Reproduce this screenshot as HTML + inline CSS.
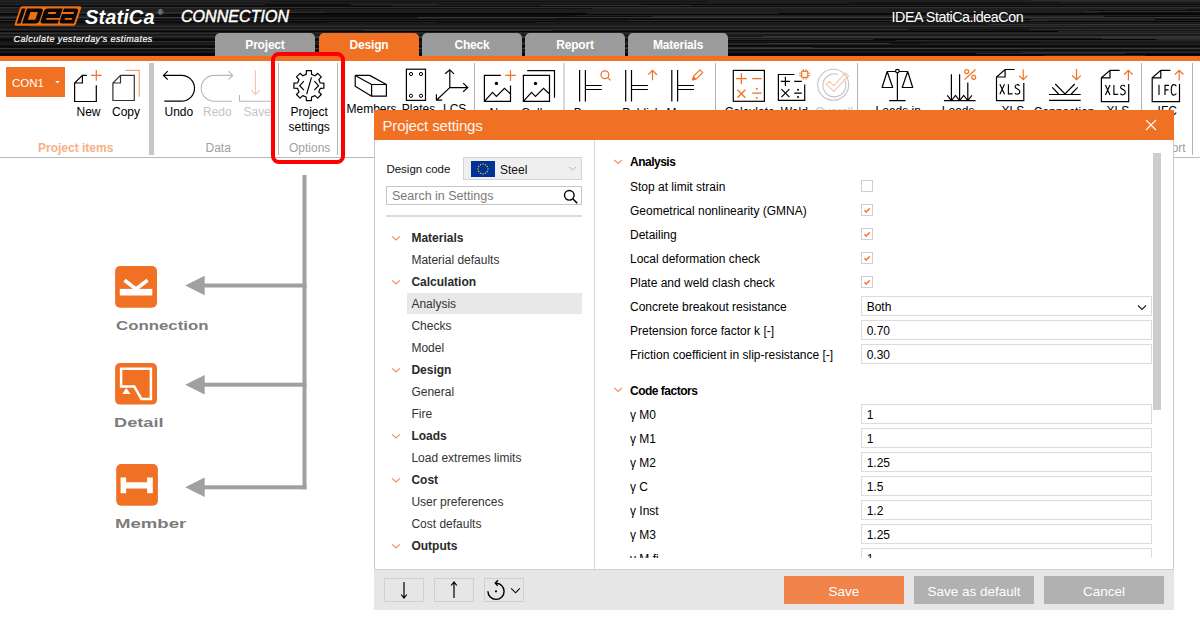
<!DOCTYPE html>
<html><head><meta charset="utf-8">
<style>
*{margin:0;padding:0;box-sizing:border-box}
html,body{width:1200px;height:630px;overflow:hidden;background:#fff;font-family:"Liberation Sans",sans-serif;color:#000}
.a{position:absolute}
svg{position:absolute;overflow:visible}
#hdr{left:0;top:0;width:1200px;height:56px;background:#222;
background-image:repeating-linear-gradient(180deg,#1c1c1c 0px,#2e2e2e 1px,#141414 2px,#262626 3px,#303030 4px,#181818 5px,#222 7px,#2a2a2a 8px,#101010 9px,#262626 11px);}
.tab{top:33px;height:23px;width:100px;border-radius:5px 5px 0 0;background:#9b9b9b;color:#fff;font-weight:bold;font-size:12px;text-align:center;line-height:25.5px;letter-spacing:-0.2px}
#ostrip{left:0;top:56px;width:1200px;height:5px;background:#f07124}
#rib{left:0;top:61px;width:1200px;height:96px;background:#fff}
#ribline{left:0;top:157px;width:1200px;height:1px;background:#b9b9b9}
.rl{font-size:12px;line-height:1;color:#000;white-space:nowrap}
.gl{font-size:12px;line-height:1;color:#a0a0a0;white-space:nowrap;top:142.4px}
.big{font-size:12.5px;line-height:1;font-weight:bold;color:#7c7c7c;white-space:nowrap;transform-origin:0 0}
.dt{font-size:12px;line-height:1;color:#111;white-space:nowrap}
.tb{font-size:12px;line-height:1;font-weight:bold;color:#2a2a2a;white-space:nowrap}
.tr{font-size:12px;line-height:1;color:#333;white-space:nowrap}
.rb{font-size:12px;line-height:1;font-weight:bold;color:#000;white-space:nowrap;letter-spacing:-0.5px}
.rr{font-size:12px;line-height:1;color:#000;white-space:nowrap}
.inp{width:291px;height:20px;border:1px solid #dcdcdc;background:#fff}
.fb{top:578px;width:40px;height:24px;border:1px solid #d0d0d0}
.btn{top:576px;width:120px;height:28px;color:#fff;font-size:13.5px;line-height:31px;text-align:center;white-space:nowrap}
</style></head><body>
<div id="hdr" class="a"></div>
<svg width="1200" height="56" style="left:0;top:0" shape-rendering="crispEdges"><rect x="0" y="0" width="1200" height="1" fill="rgb(30,30,30)"/><rect x="0" y="1" width="1200" height="1" fill="rgb(34,34,34)"/><rect x="0" y="2" width="1200" height="1" fill="rgb(30,30,30)"/><rect x="0" y="3" width="1200" height="1" fill="rgb(25,25,25)"/><rect x="0" y="4" width="1200" height="1" fill="rgb(12,12,12)"/><rect x="0" y="5" width="1200" height="1" fill="rgb(34,34,34)"/><rect x="0" y="6" width="1200" height="1" fill="rgb(12,12,12)"/><rect x="0" y="7" width="1200" height="1" fill="rgb(47,47,47)"/><rect x="0" y="8" width="1200" height="1" fill="rgb(33,33,33)"/><rect x="0" y="9" width="1200" height="1" fill="rgb(31,31,31)"/><rect x="0" y="10" width="1200" height="1" fill="rgb(29,29,29)"/><rect x="0" y="11" width="1200" height="1" fill="rgb(31,31,31)"/><rect x="0" y="12" width="1200" height="1" fill="rgb(31,31,31)"/><rect x="0" y="13" width="1200" height="1" fill="rgb(6,6,6)"/><rect x="0" y="14" width="1200" height="1" fill="rgb(8,8,8)"/><rect x="0" y="15" width="1200" height="1" fill="rgb(31,31,31)"/><rect x="0" y="16" width="1200" height="1" fill="rgb(12,12,12)"/><rect x="0" y="17" width="1200" height="1" fill="rgb(55,55,55)"/><rect x="0" y="18" width="1200" height="1" fill="rgb(30,30,30)"/><rect x="0" y="19" width="1200" height="1" fill="rgb(9,9,9)"/><rect x="0" y="20" width="1200" height="1" fill="rgb(32,32,32)"/><rect x="0" y="21" width="1200" height="1" fill="rgb(9,9,9)"/><rect x="0" y="22" width="1200" height="1" fill="rgb(30,30,30)"/><rect x="0" y="23" width="1200" height="1" fill="rgb(23,23,23)"/><rect x="0" y="24" width="1200" height="1" fill="rgb(27,27,27)"/><rect x="0" y="25" width="1200" height="1" fill="rgb(30,30,30)"/><rect x="0" y="26" width="1200" height="1" fill="rgb(47,47,47)"/><rect x="0" y="27" width="1200" height="1" fill="rgb(23,23,23)"/><rect x="0" y="28" width="1200" height="1" fill="rgb(26,26,26)"/><rect x="0" y="29" width="1200" height="1" fill="rgb(46,46,46)"/><rect x="0" y="30" width="1200" height="1" fill="rgb(22,22,22)"/><rect x="0" y="31" width="1200" height="1" fill="rgb(5,5,5)"/><rect x="0" y="32" width="1200" height="1" fill="rgb(33,33,33)"/><rect x="0" y="33" width="1200" height="1" fill="rgb(47,47,47)"/><rect x="0" y="34" width="1200" height="1" fill="rgb(25,25,25)"/><rect x="0" y="35" width="1200" height="1" fill="rgb(26,26,26)"/><rect x="0" y="36" width="1200" height="1" fill="rgb(50,50,50)"/><rect x="0" y="37" width="1200" height="1" fill="rgb(52,52,52)"/><rect x="0" y="38" width="1200" height="1" fill="rgb(23,23,23)"/><rect x="0" y="39" width="1200" height="1" fill="rgb(6,6,6)"/><rect x="0" y="40" width="1200" height="1" fill="rgb(12,12,12)"/><rect x="0" y="41" width="1200" height="1" fill="rgb(24,24,24)"/><rect x="0" y="42" width="1200" height="1" fill="rgb(25,25,25)"/><rect x="0" y="43" width="1200" height="1" fill="rgb(25,25,25)"/><rect x="0" y="44" width="1200" height="1" fill="rgb(34,34,34)"/><rect x="0" y="45" width="1200" height="1" fill="rgb(11,11,11)"/><rect x="0" y="46" width="1200" height="1" fill="rgb(11,11,11)"/><rect x="0" y="47" width="1200" height="1" fill="rgb(22,22,22)"/><rect x="0" y="48" width="1200" height="1" fill="rgb(58,58,58)"/><rect x="0" y="49" width="1200" height="1" fill="rgb(22,22,22)"/><rect x="0" y="50" width="1200" height="1" fill="rgb(11,11,11)"/><rect x="0" y="51" width="1200" height="1" fill="rgb(31,31,31)"/><rect x="0" y="52" width="1200" height="1" fill="rgb(23,23,23)"/><rect x="0" y="53" width="1200" height="1" fill="rgb(7,7,7)"/><rect x="0" y="54" width="1200" height="1" fill="rgb(9,9,9)"/><rect x="0" y="55" width="1200" height="1" fill="rgb(10,10,10)"/><rect x="406" y="53" width="277" height="1" fill="rgb(6,6,6)" opacity="0.6"/><rect x="-16" y="4" width="186" height="1" fill="rgb(8,8,8)" opacity="0.6"/><rect x="1031" y="0" width="268" height="1" fill="rgb(55,55,55)" opacity="0.6"/><rect x="728" y="39" width="145" height="1" fill="rgb(62,62,62)" opacity="0.6"/><rect x="976" y="53" width="149" height="1" fill="rgb(62,62,62)" opacity="0.6"/><rect x="1084" y="11" width="158" height="1" fill="rgb(55,55,55)" opacity="0.6"/><rect x="1050" y="14" width="207" height="1" fill="rgb(8,8,8)" opacity="0.6"/><rect x="1088" y="10" width="363" height="1" fill="rgb(8,8,8)" opacity="0.6"/><rect x="595" y="43" width="327" height="1" fill="rgb(6,6,6)" opacity="0.6"/><rect x="-103" y="26" width="133" height="1" fill="rgb(6,6,6)" opacity="0.6"/><rect x="849" y="2" width="210" height="1" fill="rgb(8,8,8)" opacity="0.6"/><rect x="602" y="47" width="211" height="1" fill="rgb(62,62,62)" opacity="0.6"/><rect x="1021" y="52" width="331" height="1" fill="rgb(55,55,55)" opacity="0.6"/><rect x="159" y="33" width="448" height="1" fill="rgb(6,6,6)" opacity="0.6"/><rect x="267" y="8" width="325" height="1" fill="rgb(6,6,6)" opacity="0.6"/><rect x="234" y="17" width="184" height="1" fill="rgb(6,6,6)" opacity="0.6"/><rect x="351" y="4" width="290" height="1" fill="rgb(62,62,62)" opacity="0.6"/><rect x="-77" y="15" width="103" height="1" fill="rgb(8,8,8)" opacity="0.6"/><rect x="555" y="18" width="351" height="1" fill="rgb(8,8,8)" opacity="0.6"/><rect x="541" y="5" width="150" height="1" fill="rgb(62,62,62)" opacity="0.6"/><rect x="1145" y="21" width="455" height="1" fill="rgb(8,8,8)" opacity="0.6"/><rect x="-129" y="37" width="89" height="1" fill="rgb(62,62,62)" opacity="0.6"/><rect x="438" y="22" width="97" height="1" fill="rgb(6,6,6)" opacity="0.6"/><rect x="1102" y="38" width="118" height="1" fill="rgb(62,62,62)" opacity="0.6"/><rect x="437" y="4" width="243" height="1" fill="rgb(8,8,8)" opacity="0.6"/><rect x="-46" y="4" width="311" height="1" fill="rgb(55,55,55)" opacity="0.6"/><rect x="-109" y="47" width="457" height="1" fill="rgb(8,8,8)" opacity="0.6"/><rect x="499" y="50" width="260" height="1" fill="rgb(6,6,6)" opacity="0.6"/><rect x="769" y="43" width="119" height="1" fill="rgb(62,62,62)" opacity="0.6"/><rect x="-139" y="50" width="335" height="1" fill="rgb(6,6,6)" opacity="0.6"/><rect x="1156" y="39" width="275" height="1" fill="rgb(62,62,62)" opacity="0.6"/><rect x="-175" y="37" width="391" height="1" fill="rgb(6,6,6)" opacity="0.6"/><rect x="-15" y="5" width="407" height="1" fill="rgb(6,6,6)" opacity="0.6"/><rect x="652" y="16" width="452" height="1" fill="rgb(55,55,55)" opacity="0.6"/><rect x="989" y="24" width="314" height="1" fill="rgb(62,62,62)" opacity="0.6"/><rect x="908" y="29" width="122" height="1" fill="rgb(6,6,6)" opacity="0.6"/><rect x="1031" y="19" width="124" height="1" fill="rgb(62,62,62)" opacity="0.6"/><rect x="271" y="1" width="437" height="1" fill="rgb(6,6,6)" opacity="0.6"/><rect x="1058" y="31" width="417" height="1" fill="rgb(62,62,62)" opacity="0.6"/><rect x="-177" y="16" width="268" height="1" fill="rgb(55,55,55)" opacity="0.6"/><rect x="1188" y="9" width="393" height="1" fill="rgb(8,8,8)" opacity="0.6"/><rect x="147" y="33" width="465" height="1" fill="rgb(55,55,55)" opacity="0.6"/><rect x="705" y="42" width="335" height="1" fill="rgb(8,8,8)" opacity="0.6"/><rect x="628" y="20" width="420" height="1" fill="rgb(55,55,55)" opacity="0.6"/><rect x="1098" y="12" width="300" height="1" fill="rgb(8,8,8)" opacity="0.6"/><rect x="587" y="13" width="192" height="1" fill="rgb(55,55,55)" opacity="0.6"/><rect x="78" y="13" width="148" height="1" fill="rgb(62,62,62)" opacity="0.6"/><rect x="-117" y="22" width="444" height="1" fill="rgb(6,6,6)" opacity="0.6"/><rect x="146" y="17" width="137" height="1" fill="rgb(62,62,62)" opacity="0.6"/><rect x="363" y="30" width="189" height="1" fill="rgb(62,62,62)" opacity="0.6"/><rect x="1081" y="24" width="346" height="1" fill="rgb(62,62,62)" opacity="0.6"/><rect x="445" y="43" width="446" height="1" fill="rgb(62,62,62)" opacity="0.6"/><rect x="-48" y="20" width="96" height="1" fill="rgb(55,55,55)" opacity="0.6"/><rect x="1044" y="55" width="101" height="1" fill="rgb(55,55,55)" opacity="0.6"/><rect x="525" y="36" width="238" height="1" fill="rgb(6,6,6)" opacity="0.6"/><rect x="78" y="41" width="287" height="1" fill="rgb(62,62,62)" opacity="0.6"/><rect x="-150" y="12" width="473" height="1" fill="rgb(55,55,55)" opacity="0.6"/><rect x="88" y="15" width="487" height="1" fill="rgb(6,6,6)" opacity="0.6"/><rect x="36" y="40" width="308" height="1" fill="rgb(6,6,6)" opacity="0.6"/><rect x="896" y="40" width="415" height="1" fill="rgb(55,55,55)" opacity="0.6"/></svg>
<!-- logo -->
<svg width="1200" height="60" style="left:0;top:0">
 <g transform="translate(20.6,6.3) skewX(-18.5)">
  <rect x="0" y="0" width="61.2" height="19.4" rx="1.8" fill="#f06e0e"/>
  <rect x="1.9" y="2.2" width="3.8" height="15" fill="#080808"/>
  <path d="M7.2,2.2 H20.7 Q23.7,2.2 23.7,5.2 V14.2 Q23.7,17.2 20.7,17.2 H7.2Z" fill="#080808"/>
  <rect x="11.7" y="5.7" width="7.5" height="7.8" fill="#f06e0e"/>
  <path d="M28,2.2 H42.9 V11.6 H29.9 V13.5 H42.9 V17.2 H28 Q25,17.2 25,14.2 V5.2 Q25,2.2 28,2.2Z" fill="#080808"/>
  <rect x="29.8" y="5.7" width="7.8" height="2.1" fill="#f06e0e"/>
  <path d="M44.1,2.2 H56 Q59.1,2.2 59.1,5.2 V17.2 H47.1 Q44.1,17.2 44.1,14.2 V7.8 H55.5 V5.7 H44.1Z" fill="#080808"/>
  <rect x="48.4" y="11.6" width="7.2" height="1.9" fill="#f06e0e"/>
 </g>
</svg>
<div class="a" style="left:85px;top:6px;font-size:20px;font-weight:bold;font-style:italic;color:#fff;white-space:nowrap;letter-spacing:0.1px">StatiCa</div>
<div class="a" style="left:157.5px;top:8px;font-size:8px;color:#ccc">&#174;</div>
<div class="a" style="left:181px;top:8px;font-size:16px;font-style:italic;font-weight:normal;-webkit-text-stroke:0.45px #fff;letter-spacing:0.05px;color:#fff;white-space:nowrap">CONNECTION</div>
<div class="a" style="left:13.5px;top:33.5px;font-size:9px;font-weight:normal;-webkit-text-stroke:0.2px #fff;font-style:italic;color:#fff;white-space:nowrap;letter-spacing:0.42px">Calculate yesterday's estimates</div>
<div class="a tab" style="left:215px">Project</div>
<div class="a tab" style="left:319px;background:#f07124">Design</div>
<div class="a tab" style="left:422px">Check</div>
<div class="a tab" style="left:525px">Report</div>
<div class="a tab" style="left:628px">Materials</div>
<div class="a" style="left:891.5px;top:8.5px;font-size:14.3px;color:#fff;white-space:nowrap;letter-spacing:-0.45px">IDEA StatiCa.ideaCon</div>
<div id="ostrip" class="a"></div>
<div id="rib" class="a"></div>
<div id="ribline" class="a"></div>
<!-- ribbon -->
<div class="a" style="left:6px;top:67px;width:59px;height:30px;background:#f07124"></div>
<div class="a" style="left:12px;top:77.8px;font-size:11.5px;line-height:1;color:#fff;white-space:nowrap">CON1</div>
<div class="a" style="left:149px;top:63px;width:5px;height:92px;background:#c6c6c6"></div>
<svg width="1200" height="160" style="left:0;top:0" fill="none" stroke="#000" stroke-width="1.2">
 <polygon points="55.3,81 59.7,81 57.5,83.5" fill="#fff" stroke="none"/>
 <!-- New -->
 <path d="M86.8,75.4 H82.4 L74.6,83 V101.5 H96.3 V85.3 M74.6,83 H82.4 V75.4"/>
 <path d="M96.3,70 V80.8 M91,75.4 H101.7" stroke="#f07124" stroke-width="1.2"/>
 <!-- Copy -->
 <path d="M120.5,75.4 H134.3 V100.5 H112.9 V83 Z M112.9,83 H120.5 V75.4" stroke="#333"/>
 <path d="M125.2,70.3 H139.3 V96.7" stroke="#f5a173" stroke-width="1.2"/>
 <!-- Undo -->
 <path d="M163.5,75.4 H181.6 A12.9,12.9 0 0 1 181.6,101.2 H164.3 M167.7,71.2 L163.5,75.4 L167.7,79.6"/>
 <!-- Redo -->
 <path d="M232.7,75.4 H214.1 A12.9,12.9 0 0 0 214.1,101.2 H232 M228.5,71.2 L232.7,75.4 L228.5,79.6" stroke="#b8b8b8" stroke-width="1.1"/>
 <!-- Save -->
 <path d="M239.5,95 V101.2 H272" stroke="#b8b8b8" stroke-width="1.1"/>
 <path d="M255.4,70.3 V94.5 M251.3,90.1 L255.4,94.5 L259.6,90.1" stroke="#f8c5ad" stroke-width="1.1"/>
 <!-- separators -->
 <path d="M278.5,63 V155 M337.5,63 V155 M474.5,63 V111 M564,63 V111 M715.5,63 V111 M857.5,63 V111 M1141.5,63 V111 M1192.5,63 V155" stroke="#b4b4b4" stroke-width="1"/>
 <!-- gear -->
 <path d="M306.2,74.4 L306.4,70.7 L311.4,70.7 L311.6,74.4 L315.0,75.8 L317.7,73.3 L321.3,76.9 L318.8,79.6 L320.2,83.0 L323.9,83.2 L323.9,88.2 L320.2,88.4 L318.8,91.8 L321.3,94.5 L317.7,98.1 L315.0,95.6 L311.6,97.0 L311.4,100.7 L306.4,100.7 L306.2,97.0 L302.8,95.6 L300.1,98.1 L296.5,94.5 L299.0,91.8 L297.6,88.4 L293.9,88.2 L293.9,83.2 L297.6,83.0 L299.0,79.6 L296.5,76.9 L300.1,73.3 L302.8,75.8Z" stroke-linejoin="round"/>
 <path d="M303.9,81.2 L299.7,85.7 L303.9,90.1 M314.3,81.2 L318.5,85.7 L314.3,90.1 M311.5,77.4 L306.7,94.2"/>
 <!-- Members -->
 <path d="M371.6,84.5 H386.4 V96.2 H371.6 Z M355.2,75.4 H369.7 L386.4,84.5 M355.2,75.4 L371.6,84.5 M355.2,75.4 V86.2 L371.6,96.2" stroke-linejoin="round"/>
 <!-- Plates -->
 <rect x="406.4" y="69.2" width="19.1" height="31.2"/>
 <g stroke-width="1"><circle cx="411" cy="74" r="1.6"/><circle cx="421" cy="74" r="1.6"/><circle cx="411" cy="95.8" r="1.6"/><circle cx="421" cy="95.8" r="1.6"/></g>
 <!-- LCS -->
 <path d="M449.8,87.6 V69.7 M445.1,73.8 L449.8,69.7 L453.9,73.8 M449.8,87.6 H467.7 M463.2,83.1 L467.7,87.6 L463.2,91.7 M449.8,87.6 L436.4,100.2 M436.4,94.2 V100.2 H442.2"/>
 <!-- New picture -->
 <path d="M500.8,75.4 H484.4 V101.3 H510.5 V85.4 M484.4,101.3 L492.5,92.4 L496.4,96.4 L504.5,88.4 L510.5,94"/>
 <circle cx="496.4" cy="83.4" r="1.7" fill="#000" stroke="none"/>
 <path d="M510.5,70.2 V80.9 M505.3,75.4 H515.8" stroke="#f07124" stroke-width="1.2"/>
 <!-- Gallery -->
 <path d="M523.4,75.4 H549.5 V101.3 H523.4 Z M523.4,101.3 L531.5,92.4 L535.5,96.4 L543.5,88.4 L549.5,94 M527.2,70.6 H554.5 V97.8"/>
 <circle cx="535.5" cy="83.4" r="1.7" fill="#000" stroke="none"/>
 <!-- browse/publish/manage -->
 <g id="bm">
 <path d="M579.6,70 V101.6 M585.4,70 V101.6 M585.4,85.5 H601.8 M585.4,89.5 H601.8"/>
 </g>
 <use href="#bm" x="46.1"/>
 <use href="#bm" x="92.2"/>
 <g stroke="#f07124" stroke-width="1.2">
  <circle cx="604.9" cy="74.7" r="3.9"/><path d="M607.6,77.4 L610.5,80.3"/>
  <path d="M652.5,70.4 V80.3 M648.4,74.7 L652.5,70.4 L656.9,74.7"/>
  <path d="M692.5,80 L693.6,76.1 L699.9,69.8 L702.7,72.6 L696.4,78.9 Z" stroke-linejoin="round"/>
 </g>
 <path d="M692.5,80 L693.6,76.1 L696.4,78.9 Z" fill="#f07124" stroke="none"/>
 <!-- Calculate -->
 <rect x="733.3" y="70.4" width="31.1" height="30.9"/>
 <g stroke="#f07124" stroke-width="1.3">
  <path d="M741.4,73.3 V83.9 M736.1,78.6 H746.7 M752.2,78.6 H761.7 M737.5,89.8 L745.3,97.7 M745.3,89.8 L737.5,97.7 M752.2,93.2 H761.7"/>
 </g>
 <circle cx="756.8" cy="88.7" r="1" fill="#f07124" stroke="none"/><circle cx="756.8" cy="98" r="1" fill="#f07124" stroke="none"/>
 <!-- Weld -->
 <path d="M794.4,74.5 H778.4 V100.4 H804.7 V84.4 M785.4,76.7 V85.9 M780.8,81.3 H790 M794.2,81.3 H801.8 M781.4,89.2 L789.4,97.2 M789.4,89.2 L781.4,97.2 M794.2,93.2 H801.8"/>
 <circle cx="798" cy="89.7" r="1" fill="#000" stroke="none"/><circle cx="798" cy="97" r="1" fill="#000" stroke="none"/>
 <g stroke="#f07124" stroke-width="1.1">
  <rect x="801.7" y="71.3" width="6" height="6"/>
  <path d="M803.4,69.3 V71.3 M806,69.3 V71.3 M803.4,77.3 V79.4 M806,77.3 V79.4 M799.2,73.3 H801.7 M799.2,75.7 H801.7 M807.7,73.3 H810 M807.7,75.7 H810"/>
 </g>
 <!-- Overall -->
 <circle cx="833.2" cy="84.8" r="15.5" stroke="#c4c4c4" stroke-width="1.1"/>
 <path d="M844,79 A11.5,11.5 0 1 1 838,74.4" stroke="#c4c4c4" stroke-width="1.1"/>
 <path d="M826.3,84.4 L829.4,81.3 L833.8,85.7 L845.6,72.9 L848.6,75.9 L833.8,91.3 Z" stroke="#f8c5ad" stroke-width="1.1" stroke-linejoin="round"/>
 <!-- Scales -->
 <path d="M897.4,71.5 V100.6 M889.2,100.6 H905.6 M887.2,71.5 H907.7 M887.2,71.5 L882.1,87.5 H892.7 Z M907.7,71.5 L902.2,87.5 H912.7 Z" stroke-linejoin="round"/>
 <circle cx="897.4" cy="71.1" r="1.8" fill="#fff"/>
 <!-- Loads -->
 <path d="M943.9,100.6 H975.6 M951.4,74.3 V100.6 M959.6,74.3 V100.6 M967.8,82.4 V100.6 M947.3,95.4 L951.4,100.6 L955.5,95.4 L959.6,100.6 L963.7,95.4 L967.8,100.6 L971.9,95.4"/>
 <g stroke="#f07124" stroke-width="1.2"><circle cx="966.7" cy="71.6" r="2"/><circle cx="973.7" cy="77.3" r="2"/><path d="M975.5,69.5 L964.5,79.6"/></g>
 <!-- XLS down -->
 <path d="M1014.7,69.5 H1005.1 L996.5,77 V100.6 H1023.8 V83.1 M996.5,77 H1005.1 V69.5"/>
 <g transform="translate(0,0)" stroke-width="1.15"><path d="M999.9,84.3 L1004.5,94.3 M1004.5,84.3 L999.9,94.3 M1008.4,84.3 V93.8 H1012.6 M1019.4,85.8 C1018.8,84.4 1015.2,84 1015.1,86.6 C1015,89 1019.8,88.6 1019.8,91.5 C1019.8,94.8 1015.6,94.8 1015,92.9"/></g>
 <path d="M1023.2,69.5 V79.7 M1019,75.6 L1023.2,79.7 L1027.3,75.6" stroke="#f07124" stroke-width="1.2"/>
 <!-- Connection -->
 <path d="M1049,94.5 H1080.7 M1049,100.3 H1080.7 M1052.3,87.3 L1058.6,94 M1055.3,84 L1065,94 L1074.7,84 M1077.7,87.3 L1071.2,94"/>
 <path d="M1076.5,69 V79.7 M1072,75.3 L1076.5,79.7 L1080.8,75.3" stroke="#f07124" stroke-width="1.2"/>
 <!-- XLS up -->
 <path d="M1119.6,70.3 H1110 L1101.4,77.8 V101.6 H1128.7 V84 M1101.4,77.8 H1110 V70.3"/>
 <g transform="translate(105.5,0.6)" stroke-width="1.15"><path d="M999.9,84.3 L1004.5,94.3 M1004.5,84.3 L999.9,94.3 M1008.4,84.3 V93.8 H1012.6 M1019.4,85.8 C1018.8,84.4 1015.2,84 1015.1,86.6 C1015,89 1019.8,88.6 1019.8,91.5 C1019.8,94.8 1015.6,94.8 1015,92.9"/></g>
 <path d="M1128.4,70.3 V80.6 M1124.2,74.5 L1128.4,70.3 L1132.6,74.5" stroke="#f07124" stroke-width="1.2"/>
 <!-- IFC -->
 <path d="M1170.4,70.3 H1160.8 L1152.2,77.8 V101.6 H1179.5 V84 M1152.2,77.8 H1160.8 V70.3"/>
 <g stroke-width="1.15"><path d="M1159,84.8 V95 M1165,84.8 V95 M1165,85.3 H1169 M1165,89.8 H1168.5 M1176.3,86.3 C1175.8,84.9 1174.8,84.6 1173.8,84.6 C1171.7,84.6 1171.3,86.5 1171.3,89.9 C1171.3,93.3 1171.7,95.1 1173.8,95.1 C1174.8,95.1 1175.8,94.8 1176.3,93.4"/></g>
 <path d="M1179.2,70.3 V80.6 M1175,74.5 L1179.2,70.3 L1183.4,74.5" stroke="#f07124" stroke-width="1.2"/>
</svg>
<div class="a rl" style="left:76.5px;top:106.2px">New</div>
<div class="a rl" style="left:112px;top:106.2px">Copy</div>
<div class="a rl" style="left:164.5px;top:106.2px">Undo</div>
<div class="a rl" style="left:203px;top:106.2px;color:#c4c4c4">Redo</div>
<div class="a rl" style="left:243.5px;top:106.2px;color:#c4c4c4">Save</div>
<div class="a rl" style="left:290.5px;top:105.6px">Project</div>
<div class="a rl" style="left:288.5px;top:121.3px">settings</div>
<div class="a gl" style="left:38px;font-weight:bold;color:#f6b088">Project items</div>
<div class="a gl" style="left:205.5px">Data</div>
<div class="a gl" style="left:289px">Options</div>
<div class="a rl" style="left:346.5px;top:103.2px">Members</div>
<div class="a rl" style="left:401.8px;top:103.2px">Plates</div>
<div class="a rl" style="left:443px;top:103.2px">LCS</div>
<div class="a rl" style="left:489.5px;top:106.6px">New</div>
<div class="a rl" style="left:521px;top:106.6px">Gallery</div>
<div class="a rl" style="left:573.7px;top:107px">Browse</div>
<div class="a rl" style="left:622.2px;top:107px">Publish</div>
<div class="a rl" style="left:666.5px;top:107px">Manage</div>
<div class="a rl" style="left:724.7px;top:106.4px">Calculate</div>
<div class="a rl" style="left:780.7px;top:106.2px">Weld</div>
<div class="a rl" style="left:815.2px;top:106.4px;color:#c4c4c4">Overall</div>
<div class="a rl" style="left:875.6px;top:105px">Loads in</div>
<div class="a rl" style="left:941.8px;top:105px">Loads</div>
<div class="a rl" style="left:1001.6px;top:105px">XLS</div>
<div class="a rl" style="left:1033.7px;top:105.5px">Connection</div>
<div class="a rl" style="left:1106.5px;top:105px">XLS</div>
<div class="a rl" style="left:1157.6px;top:105px">IFC</div>
<div class="a gl" style="left:1151px">Export</div>
<!-- red highlight -->
<div class="a" style="left:271px;top:52px;width:74px;height:112px;border:4px solid #ff0000;border-radius:8px"></div>
<!-- left diagram -->
<svg width="380" height="630" style="left:0;top:0">
 <g fill="#a0a0a0">
  <rect x="302.5" y="175" width="4" height="314.3"/>
  <rect x="203" y="283.5" width="103.5" height="4"/>
  <rect x="203" y="382.7" width="103.5" height="4"/>
  <rect x="203" y="485.3" width="103.5" height="4"/>
  <polygon points="185.2,285.5 204.7,275.7 204.7,295.3"/>
  <polygon points="185.2,384.7 204.7,374.9 204.7,394.5"/>
  <polygon points="185.2,487.3 204.7,477.5 204.7,497.1"/>
 </g>
 <g fill="#f07124">
  <rect x="115.1" y="266" width="41.9" height="41.7" rx="5"/>
  <rect x="115.1" y="363" width="41.9" height="41.6" rx="5"/>
  <rect x="116.2" y="464" width="41.7" height="41.7" rx="5"/>
 </g>
 <rect x="119.8" y="288.9" width="32.5" height="6.6" fill="#fff"/>
 <path d="M124.5,280.2 L136,289 L147.6,280.2" stroke="#fff" stroke-width="3.6" fill="none"/>
 <path d="M121.1,368.7 H150.9 V398.9 H141.4 L134.3,386.5 H121.1 Z" stroke="#fff" stroke-width="2.5" fill="none"/>
 <polygon points="126.1,388.1 130.6,393.9 122.4,393.9" fill="#fff"/>
 <path d="M120.6,477.4 H126.1 V482.3 H147.1 V477.4 H152.8 V493.3 H147.1 V488.5 H126.1 V493.3 H120.6 Z" fill="#fff"/>
</svg>
<div class="a big" style="left:115.6px;top:320px;transform:scaleX(1.345)">Connection</div>
<div class="a big" style="left:113.8px;top:417px;transform:scaleX(1.455)">Detail</div>
<div class="a big" style="left:114.7px;top:517.5px;transform:scaleX(1.485)">Member</div>
<!-- dialog -->
<div class="a" style="left:374px;top:110px;width:800px;height:30px;background:#f07124"></div>
<div class="a" style="left:382.5px;top:117.5px;font-size:15px;line-height:1;color:#fff6f0;white-space:nowrap;letter-spacing:-0.15px">Project settings</div>
<svg width="12" height="12" style="left:1145px;top:119px"><path d="M1,1 L11,11 M11,1 L1,11" stroke="#fff" stroke-width="1.1"/></svg>
<div class="a" style="left:374px;top:140px;width:800px;height:430px;background:#fff;border-left:1px solid #cacaca;border-right:1px solid #cacaca"></div>
<div class="a" style="left:594px;top:140px;width:1px;height:429px;background:#d6d6d6"></div>
<!-- left pane -->
<div class="a dt" style="left:386.4px;top:164.1px;font-size:11.5px">Design code</div>
<div class="a" style="left:463px;top:157px;width:119px;height:23px;background:#efefef;border:1px solid #d4d4d4"></div>
<svg width="24" height="16" style="left:471px;top:161px">
 <rect width="24" height="16" fill="#003399"/>
 <g fill="#ffcc00">
  <circle cx="12" cy="3" r="0.7"/><circle cx="14.5" cy="3.7" r="0.7"/><circle cx="16.3" cy="5.5" r="0.7"/><circle cx="17" cy="8" r="0.7"/><circle cx="16.3" cy="10.5" r="0.7"/><circle cx="14.5" cy="12.3" r="0.7"/><circle cx="12" cy="13" r="0.7"/><circle cx="9.5" cy="12.3" r="0.7"/><circle cx="7.7" cy="10.5" r="0.7"/><circle cx="7" cy="8" r="0.7"/><circle cx="7.7" cy="5.5" r="0.7"/><circle cx="9.5" cy="3.7" r="0.7"/>
 </g>
</svg>
<div class="a dt" style="left:500px;top:163.6px">Steel</div>
<svg width="10" height="6" style="left:568px;top:166px"><path d="M1,1 L4.5,4 L8,1" stroke="#b8b8b8" fill="none" stroke-width="1"/></svg>
<div class="a" style="left:386px;top:186px;width:196px;height:19px;border:1px solid #c6c6c6;background:#fff"></div>
<div class="a dt" style="left:392px;top:189.8px;font-size:12.5px;color:#7a7a7a">Search in Settings</div>
<svg width="16" height="16" style="left:563px;top:189px"><circle cx="6.3" cy="6.3" r="4.8" stroke="#000" stroke-width="1.4" fill="none"/><path d="M9.8,9.8 L14.2,14.2" stroke="#000" stroke-width="1.6"/></svg>
<div class="a" style="left:386px;top:214.5px;width:196px;height:2px;background:#dcdcdc"></div>
<div class="a" style="left:407px;top:293px;width:175px;height:21px;background:#e8e8e8"></div>
<svg width="20" height="400" style="left:388px;top:200px" fill="none" stroke="#f28a5c" stroke-width="1.1">
 <path d="M4.1,36.4 L8,40 L11.9,36.4"/>
 <path d="M4.1,80.4 L8,84 L11.9,80.4"/>
 <path d="M4.1,168.4 L8,172 L11.9,168.4"/>
 <path d="M4.1,234.4 L8,238 L11.9,234.4"/>
 <path d="M4.1,278.4 L8,282 L11.9,278.4"/>
 <path d="M4.1,344.4 L8,348 L11.9,344.4"/>
</svg>
<div class="a tb" style="left:411.4px;top:231.5px">Materials</div>
<div class="a tr" style="left:411.4px;top:253.5px">Material defaults</div>
<div class="a tb" style="left:411.4px;top:275.5px">Calculation</div>
<div class="a tr" style="left:411.4px;top:297.5px">Analysis</div>
<div class="a tr" style="left:411.4px;top:319.5px">Checks</div>
<div class="a tr" style="left:411.4px;top:341.5px">Model</div>
<div class="a tb" style="left:411.4px;top:363.5px">Design</div>
<div class="a tr" style="left:411.4px;top:385.5px">General</div>
<div class="a tr" style="left:411.4px;top:407.5px">Fire</div>
<div class="a tb" style="left:411.4px;top:429.5px">Loads</div>
<div class="a tr" style="left:411.4px;top:451.5px">Load extremes limits</div>
<div class="a tb" style="left:411.4px;top:473.5px">Cost</div>
<div class="a tr" style="left:411.4px;top:495.5px">User preferences</div>
<div class="a tr" style="left:411.4px;top:517.5px">Cost defaults</div>
<div class="a tb" style="left:411.4px;top:539.5px">Outputs</div>
<!-- right pane -->
<div class="a" style="left:596px;top:145px;width:576px;height:413px;overflow:hidden">
<svg width="30" height="420" style="left:0;top:0" fill="none" stroke="#f28a5c" stroke-width="1.1">
<path d="M18.2,14.9 L22.1,18.5 L26.0,14.9"/>
<path d="M18.2,242.9 L22.1,246.5 L26.0,242.9"/>
</svg>
<div class="a rb" style="left:34.0px;top:10.84px">Analysis</div>
<div class="a rr" style="left:34.0px;top:35.74px">Stop at limit strain</div>
<div class="a rr" style="left:34.0px;top:59.74px">Geometrical nonlinearity (GMNA)</div>
<div class="a rr" style="left:34.0px;top:83.74px">Detailing</div>
<div class="a rr" style="left:34.0px;top:107.74px">Local deformation check</div>
<div class="a rr" style="left:34.0px;top:131.74px">Plate and weld clash check</div>
<div class="a rr" style="left:34.0px;top:155.74px">Concrete breakout resistance</div>
<div class="a rr" style="left:34.0px;top:179.74px">Pretension force factor k [-]</div>
<div class="a rr" style="left:34.0px;top:203.74px">Friction coefficient in slip-resistance [-]</div>
<svg width="12" height="12" style="left:265px;top:35px"><rect x="0.5" y="0.5" width="11" height="11" fill="#fff" stroke="#cfcfcf"/></svg>
<svg width="12" height="12" style="left:265px;top:59px"><rect x="0.5" y="0.5" width="11" height="11" fill="#fff" stroke="#cfcfcf"/><path d="M3.3,6.2 L5.2,8 L8.8,4.2" stroke="#f07124" stroke-width="1.3" fill="none"/></svg>
<svg width="12" height="12" style="left:265px;top:83px"><rect x="0.5" y="0.5" width="11" height="11" fill="#fff" stroke="#cfcfcf"/><path d="M3.3,6.2 L5.2,8 L8.8,4.2" stroke="#f07124" stroke-width="1.3" fill="none"/></svg>
<svg width="12" height="12" style="left:265px;top:107px"><rect x="0.5" y="0.5" width="11" height="11" fill="#fff" stroke="#cfcfcf"/><path d="M3.3,6.2 L5.2,8 L8.8,4.2" stroke="#f07124" stroke-width="1.3" fill="none"/></svg>
<svg width="12" height="12" style="left:265px;top:131px"><rect x="0.5" y="0.5" width="11" height="11" fill="#fff" stroke="#cfcfcf"/><path d="M3.3,6.2 L5.2,8 L8.8,4.2" stroke="#f07124" stroke-width="1.3" fill="none"/></svg>
<div class="a inp" style="left:265px;top:151px"></div><div class="a rr" style="left:270.7px;top:155.84px">Both</div>
<svg width="12" height="8" style="left:541px;top:159px"><path d="M1,1.5 L5,5.5 L9,1.5" stroke="#222" stroke-width="1.2" fill="none"/></svg>
<div class="a inp" style="left:265px;top:175px"></div><div class="a rr" style="left:270.7px;top:179.84px">0.70</div>
<div class="a inp" style="left:265px;top:199px"></div><div class="a rr" style="left:270.7px;top:203.84px">0.30</div>
<div class="a rb" style="left:34.0px;top:239.64px">Code factors</div>
<div class="a rr" style="left:34.0px;top:263.54px">γ M0</div>
<div class="a inp" style="left:265px;top:259px"></div><div class="a rr" style="left:270.7px;top:263.84px">1</div>
<div class="a rr" style="left:34.0px;top:287.54px">γ M1</div>
<div class="a inp" style="left:265px;top:283px"></div><div class="a rr" style="left:270.7px;top:287.84px">1</div>
<div class="a rr" style="left:34.0px;top:311.54px">γ M2</div>
<div class="a inp" style="left:265px;top:307px"></div><div class="a rr" style="left:270.7px;top:311.84px">1.25</div>
<div class="a rr" style="left:34.0px;top:335.54px">γ C</div>
<div class="a inp" style="left:265px;top:331px"></div><div class="a rr" style="left:270.7px;top:335.84px">1.5</div>
<div class="a rr" style="left:34.0px;top:359.54px">γ Inst</div>
<div class="a inp" style="left:265px;top:355px"></div><div class="a rr" style="left:270.7px;top:359.84px">1.2</div>
<div class="a rr" style="left:34.0px;top:383.54px">γ M3</div>
<div class="a inp" style="left:265px;top:379px"></div><div class="a rr" style="left:270.7px;top:383.84px">1.25</div>
<div class="a rr" style="left:34.0px;top:407.54px">γ M fi</div>
<div class="a inp" style="left:265px;top:403px"></div><div class="a rr" style="left:270.7px;top:407.84px">1</div>
<div class="a" style="left:557px;top:8px;width:8px;height:257px;background:#cdcdcd"></div>
</div><!-- footer -->
<div class="a" style="left:374px;top:569px;width:800px;height:41px;background:#e6e6e6;border-top:1px solid #cfcfcf"></div>
<div class="a fb" style="left:384px"></div>
<div class="a fb" style="left:434px"></div>
<div class="a fb" style="left:484px"></div>
<svg width="200" height="40" style="left:374px;top:570px" fill="none" stroke="#000" stroke-width="1.3">
 <path d="M30,12 V28 M27.2,24.5 L30,28 L32.8,24.5" stroke-width="1.2"/>
 <path d="M80,28 V12 M77.2,15.5 L80,12 L82.8,15.5" stroke-width="1.2"/>
 <path d="M113.9,21.3 A8.1,8.1 0 1 0 121.8,13.2 M124,10.2 L121.3,13.1 L123.6,15.9" stroke-width="1.4"/>
 <circle cx="122" cy="21.3" r="1.1" fill="#000" stroke="none"/>
 <path d="M137.1,18.4 L141.6,22.8 L145.8,18.4" stroke-width="1.1"/>
</svg>
<div class="a btn" style="left:784px;background:#f0844a">Save</div>
<div class="a btn" style="left:914px;background:#b1b1b1">Save as default</div>
<div class="a btn" style="left:1044px;background:#b1b1b1">Cancel</div>
</body></html>
